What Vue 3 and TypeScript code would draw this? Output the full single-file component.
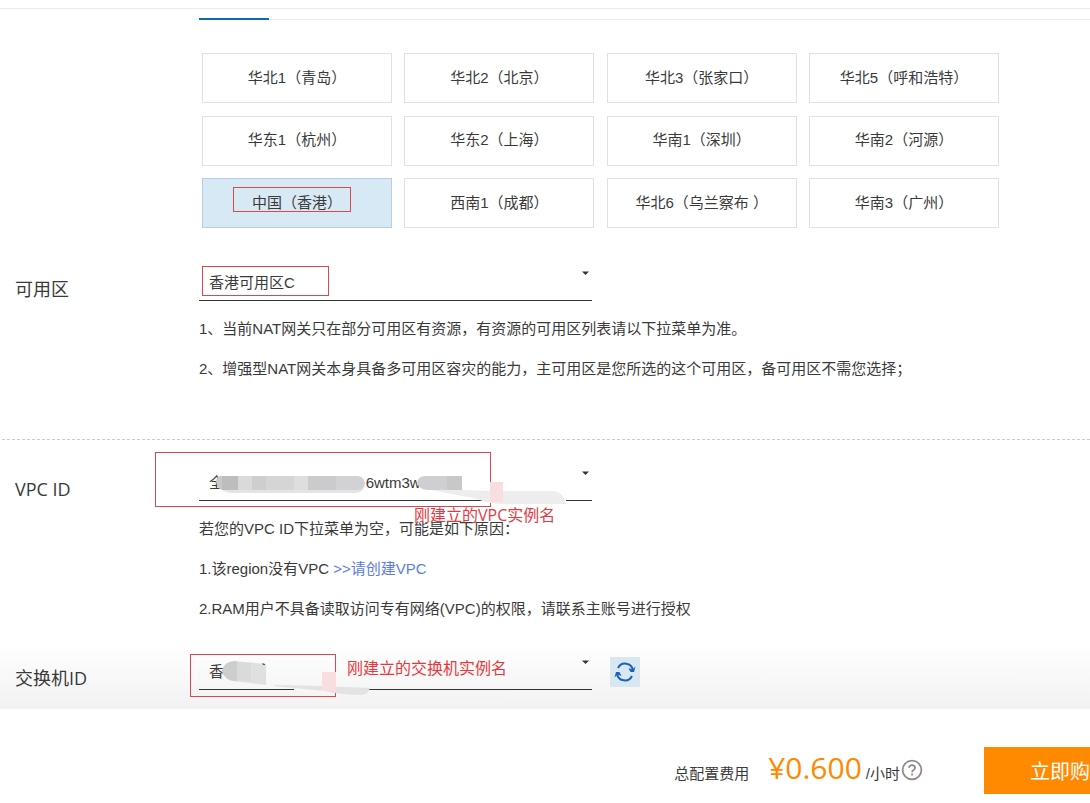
<script setup lang="ts">
import { ref } from 'vue'

const regions: string[] = [
  '华北1（青岛）', '华北2（北京）', '华北3（张家口）', '华北5（呼和浩特）',
  '华东1（杭州）', '华东2（上海）', '华南1（深圳）', '华南2（河源）',
  '中国（香港）', '西南1（成都）', '华北6（乌兰察布 ）', '华南3（广州）',
]
const selected = ref(8)
const zone = ref('香港可用区C')
const maskedVpc = '全' + '\u00a0'.repeat(34) + '6wtm3w'
const vpc = ref(maskedVpc)
const vswitch = ref('香')
</script>

<template>
  <div class="page">
    <main class="config">
      <div class="tabs"><span class="tab-active"></span></div>
      <div class="regions">
        <button
          v-for="(name, i) in regions"
          :key="name"
          type="button"
          class="region"
          :class="{ active: i === selected }"
          @click="selected = i"
        >
          {{ name }}
          <span v-if="i === 8" class="mark mark-region"></span>
        </button>
      </div>

      <section class="row">
        <label class="label" for="zone">可用区</label>
        <div class="field">
          <div class="picker">
            <select id="zone" v-model="zone"><option>香港可用区C</option></select>
            <svg class="arrow" viewBox="0 0 7 4"><path d="M0 0.5H7L3.5 4Z" fill="#333" /></svg>
            <span class="mark mark-zone"></span>
          </div>
          <div class="notes">
            <p>1、当前NAT网关只在部分可用区有资源，有资源的可用区列表请以下拉菜单为准。</p>
            <p>2、增强型NAT网关本身具备多可用区容灾的能力，主可用区是您所选的这个可用区，备可用区不需您选择；</p>
          </div>
        </div>
      </section>

      <hr class="divider" />

      <section class="row">
        <label class="label" for="vpc">VPC ID</label>
        <div class="field">
          <div class="picker">
            <select id="vpc" v-model="vpc"><option :value="maskedVpc">{{ maskedVpc }}</option></select>
            <svg class="arrow" viewBox="0 0 7 4"><path d="M0 0.5H7L3.5 4Z" fill="#333" /></svg>
            <span class="mark mark-vpc"></span>
            <svg class="smudge" viewBox="0 0 393 48">
              <path d="M286 36h81v3h-81z" fill="#fff" />
              <path d="M18 17q0-5 5-5h135q7 1 8 8q-1 9-11 9H34q-14 0-16-12z" fill="#e4e4e4" />
              <path d="M17 17q1-5 6-5v14q-5-1-6-9z" fill="#c9c9c9" />
              <path d="M23 12h16v14H23z" fill="#bdbdbc" />
              <path d="M39 12h14v14H39z" fill="#dadada" />
              <path d="M53 12h14v14H53z" fill="#cecece" />
              <path d="M67 12h28v14H67z" fill="#d5d5d5" />
              <path d="M95 12h14v14H95z" fill="#dedede" />
              <path d="M109 12h28v14h-28z" fill="#cbcbcd" />
              <path d="M137 12h22q6 1 7 7q-1 7-7 7h-22z" fill="#d2d2d4" />
              <path d="M218 19q1-7 8-7h35q2 0 2 3v11h-34q-9 0-11-7z" fill="#cfcfd1" />
              <path d="M248 12h15v14h-15z" fill="#c8c8ca" />
              <path d="M232 26h31l29 1h63q10 2 12 13h-62q-15 0-27-5z" fill="#ededed" />
              <path d="M291 18h13v20h-13z" fill="#f8dede" />
            </svg>
            <span class="caption caption-vpc">刚建立的VPC实例名</span>
          </div>
          <div class="notes">
            <p>若您的VPC ID下拉菜单为空，可能是如下原因：</p>
            <p>1.该region没有VPC <a href="#">&gt;&gt;请创建VPC</a></p>
            <p>2.RAM用户不具备读取访问专有网络(VPC)的权限，请联系主账号进行授权</p>
          </div>
        </div>
      </section>

      <section class="row row-switch">
        <label class="label" for="vswitch">交换机ID</label>
        <div class="field field-inline">
          <div class="picker">
            <select id="vswitch" v-model="vswitch"><option>香</option></select>
            <svg class="arrow" viewBox="0 0 7 4"><path d="M0 0.5H7L3.5 4Z" fill="#333" /></svg>
            <span class="mark mark-switch"></span>
            <svg class="smudge" viewBox="0 0 393 48">
              <path d="M95 35h75v3H95z" fill="#f7f7f7" />
              <path d="M23 18q2-9 12-10l32 3v21l-16-2l-18-2q-8-2-10-10z" fill="#e0e0e0" />
              <path d="M23 18q2-10 15-10v20q-12 0-15-10z" fill="#cdcdcd" />
              <path d="M38 9l14 1v18l-14-1z" fill="#dadada" />
              <path d="M63 10l3 1v1h-2z" fill="#555" />
              <path d="M75 32l50 1l46 2q-2 7-9 7q-25-1-37-4l-50-5z" fill="#e4e2e2" />
              <path d="M123 19h14v19h-14z" fill="#f8dede" />
            </svg>
            <span class="caption caption-switch">刚建立的交换机实例名</span>
          </div>
          <button type="button" class="refresh" aria-label="刷新">
            <svg viewBox="0 0 30 30" fill="none" stroke="#1b62b5" stroke-width="2">
              <path d="M8 11A8 8 0 0 1 23 13" />
              <path d="M22 19A8 8 0 0 1 7 17" />
              <path d="M18.500 11L22.500 12.500L25.500 9.500L24 15H20.500Z" fill="#1b62b5" stroke="none" />
              <path d="M11.500 19L7.500 17.500L4.500 20.500L6 15H9.500Z" fill="#1b62b5" stroke="none" />
            </svg>
          </button>
        </div>
      </section>
    </main>

    <footer class="bar">
      <div class="cost">
        <span class="cost-label">总配置费用</span>
        <strong class="price">¥0.600</strong>
        <span>/小时</span>
        <svg class="help" viewBox="0 0 22 22" fill="none" stroke="#92898a" stroke-width="1.800">
          <circle cx="11" cy="11" r="9.400" />
          <path d="M8 8.800Q8.200 6.100 11 6.100Q14 6.200 14 8.700Q14 10.200 12.300 11.200Q11.100 12 11.100 13.300" />
          <path d="M11.100 14.600V16.500" />
        </svg>
      </div>
      <button type="button" class="buy">立即购</button>
    </footer>
  </div>
</template>

<style>
body {
  margin: 0;
  background: #fff;
}
</style>

<style scoped>
.page {
  font-family: "Liberation Sans", "Noto Sans CJK SC", sans-serif;
  font-size: 15px;
  color: #3a3a3a;
  padding-top: 8px;
  overflow: hidden;
}
.config {
  border-top: 1px solid #ebebeb;
  padding: 9px 0 18px;
  background: linear-gradient(to top, #f2f2f2, #fff 66px);
}
.tabs {
  display: flex;
  margin-left: 199px;
  height: 2px;
  background: linear-gradient(to top, #ebebeb 1px, transparent 1px);
}
.tab-active {
  width: 70px;
  background: #0f6ab4;
}
.regions {
  display: grid;
  grid-template-columns: repeat(4, 190px);
  justify-content: space-between;
  align-content: space-between;
  max-width: 797px;
  min-height: 175px;
  margin: 33px 0 36px 202px;
}
button,
select {
  font: inherit;
  color: inherit;
  margin: 0;
  border-radius: 0;
  cursor: pointer;
}
.region {
  position: relative;
  height: 50px;
  padding: 0 0 4px;
  border: 1px solid #e1e1e1;
  background: #fff;
  white-space: nowrap;
}
.region.active {
  background: #d8e9f6;
  border-color: #b4cfe4;
}
.mark {
  position: absolute;
  box-sizing: border-box;
  border: 1px solid #d9484f;
  pointer-events: none;
}
.mark-region {
  left: 30px;
  top: 8px;
  width: 118px;
  height: 25px;
}
.mark-zone {
  left: 3px;
  top: 2px;
  width: 127px;
  height: 30px;
}
.mark-vpc {
  left: -44px;
  top: -12px;
  width: 336px;
  height: 55px;
}
.mark-switch {
  left: -9px;
  top: 1px;
  width: 146px;
  height: 43px;
}
.row {
  display: grid;
  grid-template-columns: 184px 1fr;
  padding-left: 15px;
}
.row-switch {
  margin-top: 24px;
}
.label {
  padding-top: 12px;
  font-family: "Open Sans", "Noto Sans CJK SC", sans-serif;
  font-size: 18px;
  line-height: 26px;
}
.field-inline {
  display: flex;
  gap: 18px;
}
.picker {
  position: relative;
  width: 393px;
}
select {
  display: block;
  appearance: none;
  width: 100%;
  height: 37px;
  padding: 0 10px;
  border: 0;
  border-bottom: 1px solid #333;
  background: transparent;
  outline: none;
}
.arrow {
  position: absolute;
  right: 3px;
  top: 7px;
  width: 7px;
  height: 4px;
  pointer-events: none;
}
.smudge {
  position: absolute;
  left: 0;
  top: 0;
  width: 393px;
  height: 48px;
  pointer-events: none;
}
.caption {
  position: absolute;
  font-family: "Open Sans", "Noto Sans CJK SC", sans-serif;
  font-size: 16px;
  line-height: 24px;
  color: #e8383d;
  white-space: nowrap;
  pointer-events: none;
}
.caption-vpc {
  left: 215px;
  top: 39px;
}
.caption-switch {
  left: 148px;
  top: 3px;
}
.notes {
  padding-top: 8px;
  line-height: 40px;
}
.notes p {
  margin: 0;
}
a {
  color: #5b7ce6;
  text-decoration: none;
}
.divider {
  margin: 50px 0 24px 2px;
  border: 0;
  border-top: 1px dashed #ccc;
}
.refresh {
  width: 30px;
  height: 30px;
  margin-top: 4px;
  padding: 0;
  border: 0;
  background: #d9e7f3;
}
.refresh svg {
  display: block;
}
.bar {
  display: flex;
  justify-content: flex-end;
  align-items: flex-start;
  gap: 61px;
  padding: 38px 0 9px;
  background: #fff;
}
.cost {
  display: flex;
  align-items: baseline;
  padding-top: 1px;
  white-space: nowrap;
}
.cost-label {
  margin-right: 19px;
}
.price {
  margin-right: 4px;
  font-family: "Open Sans", sans-serif;
  font-size: 30px;
  font-weight: 400;
  line-height: 40px;
  color: #ff8a00;
}
.help {
  align-self: flex-start;
  width: 22px;
  height: 22px;
  margin: 11px 0 0 1px;
}
.buy {
  height: 47px;
  padding: 0 0 0 46px;
  border: 0;
  background: #ff8a00;
  color: #fff;
  font-size: 20px;
  white-space: nowrap;
}
</style>
